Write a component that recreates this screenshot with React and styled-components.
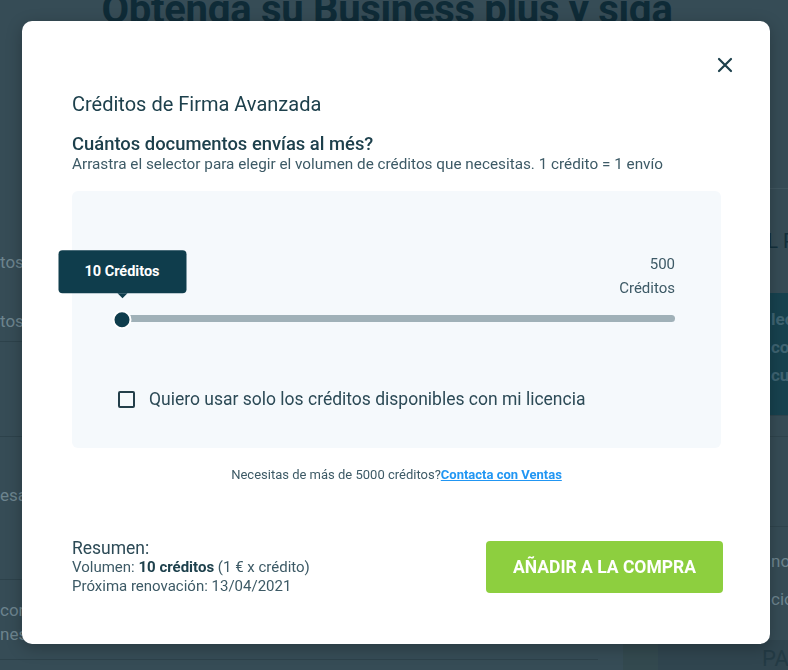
import React from 'react';
import styled, { createGlobalStyle } from 'styled-components';

const GlobalStyle = createGlobalStyle`
  html, body {
    margin: 0;
    padding: 0;
    height: 100%;
  }
  body {
    font-family: Roboto, 'Liberation Sans', sans-serif;
    background: #364c56;
    overflow: hidden;
  }
`;

/* page behind the dialog (already dimmed) */

const Page = styled.div`
  width: 788px;
  height: 670px;
  background: #364c56;
  overflow: hidden;
`;

const Hero = styled.h1`
  margin: -12px 0 0;
  padding-right: 14px;
  height: 200px;
  box-sizing: border-box;
  font-size: 40px;
  font-weight: 700;
  line-height: 44px;
  color: #0f2b37;
  text-align: center;
  letter-spacing: -0.3px;
`;

const Columns = styled.div`
  display: grid;
  grid-template-columns: 1fr 190px;
`;

const MainCol = styled.div`
  display: flex;
  flex-direction: column;
`;

const MainRow = styled.div`
  height: ${p => p.h}px;
  padding-top: ${p => p.pt}px;
  box-sizing: border-box;
  border-bottom: 1px solid #2d424b;
  color: #6d848e;
  font-size: 17px;
  line-height: ${p => p.lh || 22}px;
  white-space: nowrap;
`;

const Aside = styled.div`
  display: flex;
  flex-direction: column;
  border-top: 1px solid #40565f;
  padding-left: 40px;
`;

const AsideTitle = styled.div`
  height: 104px;
  padding: 40px 0 0 80px;
  box-sizing: border-box;
  font-size: 20px;
  color: #13303c;
  white-space: nowrap;
`;

const AsideCard = styled.div`
  height: 122px;
  background: #17424f;
  padding: 12px 0 0 133px;
  box-sizing: border-box;
  color: #3f6472;
  font-size: 17px;
  font-weight: 700;
  line-height: 28px;
  white-space: nowrap;
`;

const AsideRow = styled.div`
  height: ${p => p.h}px;
  padding: ${p => p.pt}px 0 0 133px;
  box-sizing: border-box;
  border-top: 1px solid #2f444d;
  color: #6d848e;
  font-size: 17px;
  line-height: 38px;
  white-space: nowrap;
`;

const PayBar = styled.div`
  margin-left: -15px;
  height: 40px;
  background: #30454f;
  border-left: 35px solid #33494f;
  color: #233a44;
  font-size: 22px;
  padding: 6px 0 0 104px;
  box-sizing: border-box;
`;

/* dialog */

const Overlay = styled.div`
  position: fixed;
  inset: 0;
  padding: 21px 18px 0 22px;
`;

const Modal = styled.div`
  position: relative;
  width: 748px;
  height: 623px;
  box-sizing: border-box;
  background: #ffffff;
  border-radius: 10px;
  box-shadow: 0 4px 16px rgba(0, 0, 0, 0.25);
  padding: 71px 49px 0 50px;
  color: #2c4a56;
`;

const CloseButton = styled.button`
  position: absolute;
  top: 33px;
  right: 34px;
  width: 22px;
  height: 22px;
  padding: 0;
  border: 0;
  background: transparent;
  display: flex;
  align-items: center;
  justify-content: center;
  cursor: pointer;
`;

const Title = styled.h2`
  margin: 0 0 17px;
  font-size: 20px;
  font-weight: 400;
  line-height: 24px;
  color: #1d404c;
`;

const Question = styled.h3`
  margin: 0;
  font-size: 18.4px;
  font-weight: 500;
  line-height: 22px;
  color: #1d404c;
`;

const Hint = styled.p`
  margin: 0 0 18px;
  font-size: 15.3px;
  line-height: 18px;
  color: #3d5a66;
`;

const SliderPanel = styled.div`
  height: 257px;
  box-sizing: border-box;
  background: #f5f9fc;
  border-radius: 6px;
  padding: 61px 46px 0 50px;
`;

const SliderArea = styled.div`
  position: relative;
`;

const MaxLabel = styled.div`
  text-align: right;
  font-size: 15px;
  line-height: 24px;
  color: #3d5a66;
`;

const Track = styled.div`
  position: relative;
  margin-top: 15px;
  height: 7px;
  border-radius: 4px;
  background: #a0b1b8;
`;

const Thumb = styled.div`
  position: absolute;
  left: ${p => p.pos}%;
  top: 50%;
  width: 15px;
  height: 15px;
  border: 2px solid #ffffff;
  border-radius: 50%;
  background: #0f3d4c;
  transform: translate(-50%, -46%);
`;

const Bubble = styled.div`
  position: absolute;
  left: 50%;
  bottom: 34px;
  transform: translateX(-50%);
  width: 128px;
  height: 43px;
  border-radius: 4px;
  background: #0f3d4c;
  color: #ffffff;
  font-size: 14.5px;
  font-weight: 700;
  display: flex;
  align-items: center;
  justify-content: center;

  &::after {
    content: '';
    position: absolute;
    left: 50%;
    bottom: -5px;
    margin-left: -5px;
    border-left: 5px solid transparent;
    border-right: 5px solid transparent;
    border-top: 5px solid #0f3d4c;
  }
`;

const CheckRow = styled.label`
  display: flex;
  align-items: center;
  gap: 14px;
  margin: 67px 0 0 -4px;
  font-size: 17.5px;
  color: #2c4a56;
  cursor: pointer;
`;

const Box = styled.span`
  width: 13px;
  height: 13px;
  border: 2px solid #233f4a;
  border-radius: 2px;
  flex-shrink: 0;
`;

const Contact = styled.p`
  margin: 19px 0 0;
  text-align: center;
  font-size: 13px;
  line-height: 16px;
  color: #3d5a66;

  a {
    color: #2196f3;
    font-weight: 700;
    text-decoration: underline;
  }
`;

const Footer = styled.div`
  display: flex;
  justify-content: space-between;
  align-items: center;
  margin: 55px -2px 0 0;
`;

const Summary = styled.div`
  font-size: 15px;
  line-height: 19px;
  color: #3d5a66;

  strong {
    color: #1d404c;
    font-weight: 700;
  }
`;

const SummaryTitle = styled.div`
  font-size: 17.5px;
  line-height: 20px;
  color: #2c4a56;
`;

const BuyButton = styled.button`
  width: 237px;
  height: 52px;
  border: 0;
  border-radius: 4px;
  background: #8dcf3f;
  color: #ffffff;
  font-family: Roboto, 'Liberation Sans', sans-serif;
  font-size: 17.5px;
  font-weight: 700;
  text-transform: uppercase;
  cursor: pointer;
`;

const CloseIcon = () => (
  <svg width="16" height="16" viewBox="0 0 16 16" fill="none">
    <path d="M2 2L14 14M14 2L2 14" stroke="#1d404c" strokeWidth="2.2" strokeLinecap="round" />
  </svg>
);

const Backdrop = () => (
  <Page>
    <Hero>Obtenga su Business plus y siga</Hero>
    <Columns>
      <MainCol>
        <MainRow h={154} pt={45} lh={59}>
          tos. incluidos en su plan actual
          <br />
          tos adicionales por mes
        </MainRow>
        <MainRow h={95} pt={0} />
        <MainRow h={143} pt={47}>esarios para su equipo</MainRow>
        <MainRow h={80} pt={18} lh={24}>
          condiciones generales
          <br />
          nes de uso
        </MainRow>
      </MainCol>
      <Aside>
        <AsideTitle>TOTAL PLAN</AsideTitle>
        <AsideCard>
          lección
          <br />
          condiciones
          <br />
          cumentos
        </AsideCard>
        <AsideRow h={21} pt={0} />
        <AsideRow h={90} pt={0} />
        <AsideRow h={114} pt={15}>
          normal
          <br />
          ción
        </AsideRow>
        <PayBar>PAGAR</PayBar>
      </Aside>
    </Columns>
  </Page>
);

const App = () => {
  const credits = 10;
  const max = 500;

  return (
    <>
      <GlobalStyle />
      <Backdrop />
      <Overlay>
        <Modal>
          <CloseButton aria-label="Cerrar">
            <CloseIcon />
          </CloseButton>
          <Title>Créditos de Firma Avanzada</Title>
          <Question>Cuántos documentos envías al més?</Question>
          <Hint>Arrastra el selector para elegir el volumen de créditos que necesitas. 1 crédito = 1 envío</Hint>
          <SliderPanel>
            <SliderArea>
              <MaxLabel>
                {max}
                <br />
                Créditos
              </MaxLabel>
              <Track>
                <Thumb pos={0}>
                  <Bubble>{credits} Créditos</Bubble>
                </Thumb>
              </Track>
            </SliderArea>
            <CheckRow>
              <Box />
              Quiero usar solo los créditos disponibles con mi licencia
            </CheckRow>
          </SliderPanel>
          <Contact>
            Necesitas de más de 5000 créditos?<a href="#ventas">Contacta con Ventas</a>
          </Contact>
          <Footer>
            <Summary>
              <SummaryTitle>Resumen:</SummaryTitle>
              Volumen: <strong>{credits} créditos</strong> (1 € x crédito)
              <br />
              Próxima renovación: 13/04/2021
            </Summary>
            <BuyButton>Añadir a la compra</BuyButton>
          </Footer>
        </Modal>
      </Overlay>
    </>
  );
};

export default App;
